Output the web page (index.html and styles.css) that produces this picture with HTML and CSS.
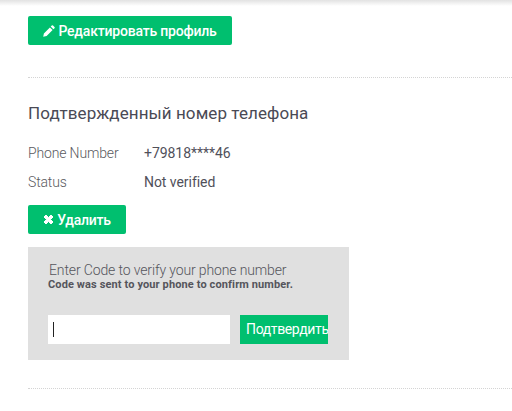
FILE: index.html
```html
<!DOCTYPE html>
<html lang="ru">
<head>
  <meta charset="UTF-8">
  <title>Профиль</title>
  <link rel="stylesheet" href="styles.css">
</head>
<body>

  <div class="top-shadow"></div>

  <div class="page">
    <a class="btn btn-edit" href="#">
      <svg class="icon" width="12" height="12" viewBox="0 0 12 12"><path d="M8.800.5a.9.9 0 0 1 1.200 0l1.500 1.500a.9.9 0 0 1 0 1.200l-1.100 1.100L7.700 1.600zM6.900 2.400l2.700 2.700-6 6-3.400.7.700-3.400z" fill="#fff"/></svg>
      Редактировать профиль
    </a>

    <hr class="divider divider-first">

    <h3>Подтвержденный номер телефона</h3>

    <div class="info-row">
      <div class="info-label">Phone Number</div>
      <div class="info-value">+79818****46</div>
    </div>
    <div class="info-row">
      <div class="info-label">Status</div>
      <div class="info-value">Not verified</div>
    </div>

    <a class="btn btn-delete" href="#">
      <svg class="icon" width="11" height="11" viewBox="0 0 11 11"><path d="M3 1l2.500 2.500L8 1l2 2-2.500 2.500L10 8l-2 2-2.500-2.500L3 10 1 8l2.500-2.500L1 3z" fill="#fff" stroke="#fff" stroke-linejoin="round" stroke-width="1"/></svg>
      Удалить
    </a>

    <div class="verify-box">
      <div class="verify-title">Enter Code to verify your phone number</div>
      <div class="verify-note">Code was sent to your phone to confirm number.</div>
      <form class="verify-form">
        <div class="code-input"><span class="caret"></span></div>
        <div class="btn-confirm">Подтвердить</div>
      </form>
    </div>

    <hr class="divider divider-last">
  </div>

</body>
</html>
```

FILE: styles.css
```css
* {
  margin: 0;
  padding: 0;
  box-sizing: border-box;
}

html, body {
  height: 100%;
  overflow: hidden;
}

body {
  background: #fff;
  font-family: Roboto, "Liberation Sans", sans-serif;
  font-size: 14px;
  color: #4a4a55;
}

.top-shadow {
  height: 6px;
  margin-bottom: -6px;
  background: linear-gradient(#e2e2e2, #fff);
}

.page {
  padding: 16px 0 0 28px;
}

.btn {
  display: flex;
  align-items: center;
  justify-content: center;
  gap: 3px;
  height: 29px;
  background: #00bf6f;
  border-radius: 2px;
  color: #fff;
  font-weight: 500;
  font-size: 14px;
  letter-spacing: -0.2px;
  text-decoration: none;
}

.btn-edit {
  width: 204px;
}

.btn-delete {
  width: 98px;
  margin-top: 9px;
}

.divider {
  border: 0;
  border-top: 1px dotted #d4d4d4;
}

.divider-first {
  margin-top: 32px;
}

.divider-last {
  margin-top: 28px;
}

h3 {
  margin-top: 25px;
  font-size: 17px;
  font-weight: 400;
  line-height: 20px;
  letter-spacing: 0.08px;
  color: #4a4a55;
}

.info-row {
  display: flex;
  height: 29px;
  align-items: center;
}

.info-row:first-of-type {
  margin-top: 15px;
}

.info-label {
  width: 116px;
  font-weight: 300;
  letter-spacing: -0.15px;
  color: #5a5a60;
}

.info-value {
  letter-spacing: -0.05px;
  color: #50505a;
}

.verify-box {
  width: 321px;
  height: 113px;
  margin-top: 13px;
  padding: 15px 20px 0;
  background: #e0e0e0;
}

.verify-title {
  padding-left: 1px;
  font-weight: 300;
  line-height: 16px;
  letter-spacing: -0.13px;
  color: #55555c;
}

.verify-note {
  font-size: 11px;
  font-weight: 700;
  line-height: 13px;
  letter-spacing: 0.12px;
  color: #55555c;
}

.verify-form {
  display: flex;
  gap: 10px;
  margin-top: 24px;
}

.code-input {
  display: flex;
  align-items: center;
  width: 182px;
  height: 29px;
  padding-left: 5px;
  background: #fff;
}

.caret {
  width: 1px;
  height: 15px;
  background: #222;
}

.btn-confirm {
  width: 88px;
  height: 29px;
  padding-left: 6px;
  overflow: hidden;
  background: #00bf6f;
  color: #fff;
  letter-spacing: -0.35px;
  line-height: 29px;
  white-space: nowrap;
}
```
